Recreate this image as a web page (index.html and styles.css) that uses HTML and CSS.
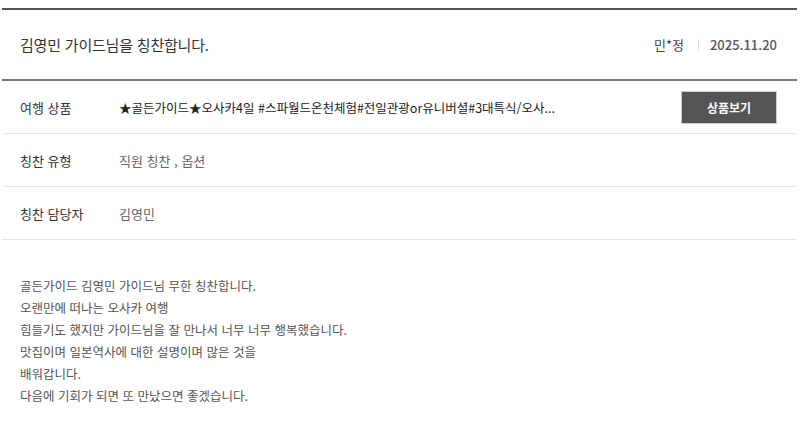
FILE: index.html
```html
<!DOCTYPE html>
<html lang="ko">
<head>
<meta charset="utf-8">
<link rel="stylesheet" href="styles.css">
</head>
<body>
<div class="board">
  <div class="head">
    <h1 class="title">김영민 가이드님을 칭찬합니다.</h1>
    <div class="meta">
      <span class="writer">민*정</span>
      <span class="sep"></span>
      <span class="date">2025.11.20</span>
    </div>
  </div>
  <div class="row">
    <div class="label">여행 상품</div>
    <div class="value product">★골든가이드★오사카4일 #스파월드온천체험#전일관광or유니버셜#3대특식/오사...</div>
    <button class="btn">상품보기</button>
  </div>
  <div class="row">
    <div class="label">칭찬 유형</div>
    <div class="value">직원 칭찬 , 옵션</div>
  </div>
  <div class="row">
    <div class="label">칭찬 담당자</div>
    <div class="value">김영민</div>
  </div>
  <div class="content">
    <p>골든가이드 김영민 가이드님 무한 칭찬합니다.</p>
    <p>오랜만에 떠나는 오사카 여행</p>
    <p>힘들기도 했지만 가이드님을 잘 만나서 너무 너무 행복했습니다.</p>
    <p>맛집이며 일본역사에 대한 설명이며 많은 것을</p>
    <p>배워갑니다.</p>
    <p>다음에 기회가 되면 또 만났으면 좋겠습니다.</p>
  </div>
</div>
</body>
</html>
```
FILE: styles.css
```css
* { box-sizing: border-box; }
html, body { margin: 0; padding: 0; background: #fff; }
body {
  font-family: "Noto Sans CJK KR", "Noto Sans", sans-serif;
  color: #333;
  padding: 8px 3px 0 2px;
}
.board { width: 795px; }
.head {
  height: 73px;
  border-top: 2px solid #555;
  border-bottom: 2px solid #777;
  display: flex;
  align-items: center;
  justify-content: space-between;
  padding: 0 20px 0 18px;
}
.title {
  margin: 0;
  font-size: 15px;
  font-weight: 400;
  color: #333;
  letter-spacing: -0.2px;
}
.meta {
  display: flex;
  align-items: center;
  font-size: 13px;
  color: #555;
  font-weight: 500;
}
.writer { font-weight: 400; color: #444; }
.sep {
  width: 1px;
  height: 11px;
  background: #ddd;
  margin: 0 11px 0 14px;
}
.row {
  height: 53px;
  border-bottom: 1px solid #e5e5e5;
  display: flex;
  align-items: center;
  padding: 0 20px 0 18px;
}
.label {
  width: 99px;
  flex: none;
  font-size: 13px;
  color: #333;
  font-weight: 400;
}
.value {
  flex: 1;
  font-size: 13px;
  color: #666;
  white-space: nowrap;
  overflow: hidden;
}
.value.product { color: #222; font-size: 12.5px; }
.btn {
  flex: none;
  width: 96px;
  height: 33px;
  background: #555;
  border: 1px solid #ccc;
  color: #fff;
  font-family: inherit;
  font-size: 12px;
  font-weight: 700;
  padding: 0;
}
.content {
  padding: 35px 18px 0;
}
.content p {
  margin: 0;
  font-size: 12.5px;
  line-height: 22px;
  color: #555;
}
```
